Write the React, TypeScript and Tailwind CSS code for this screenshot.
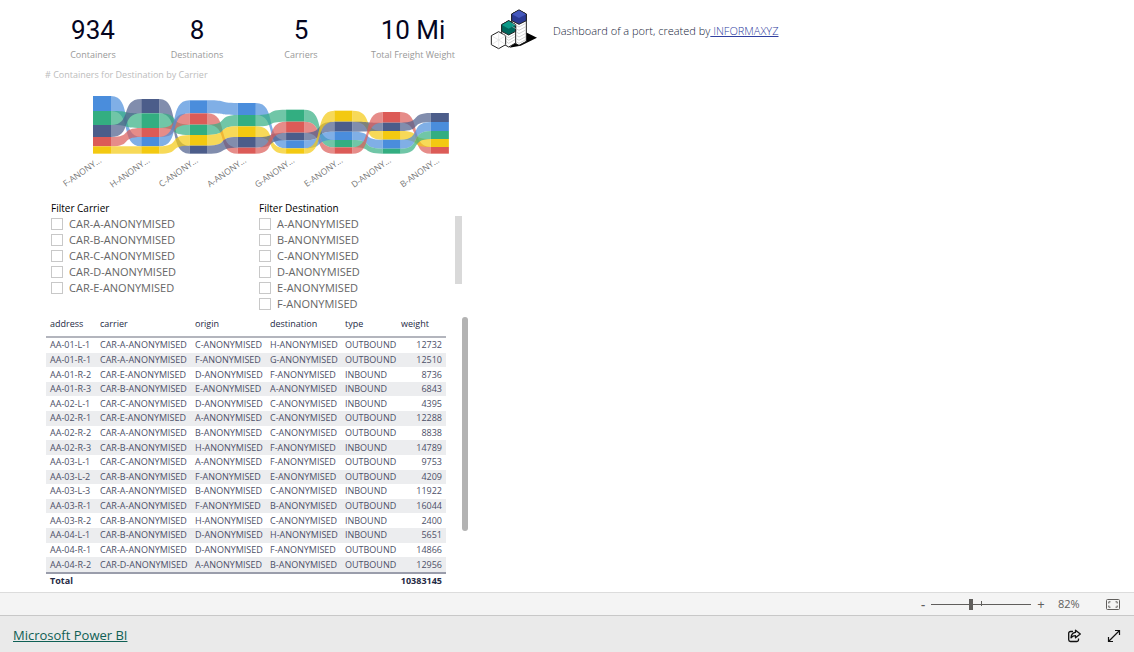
import { useState } from "react";

const kpis = [
  { label: "Containers", value: "934" },
  { label: "Destinations", value: "8" },
  { label: "Carriers", value: "5" },
  { label: "Total Freight Weight", value: "10 Mi" },
];

const carriers = ["A", "B", "C", "D", "E"];
const destinations = ["A", "B", "C", "D", "E", "F"];

const colors: Record<string, string> = {
  blue: "#4a8ddc",
  green: "#33ae81",
  navy: "#4c5d8a",
  red: "#dc5b57",
  yellow: "#f3c911",
};

// carrier order from top to bottom, with the y of every boundary
const ribbons = [
  { name: "F", order: ["blue", "green", "navy", "red", "yellow"], y: [33, 78, 120, 156, 184, 206] },
  { name: "H", order: ["navy", "green", "red", "blue", "yellow"], y: [42, 85, 129, 156, 184, 206] },
  { name: "C", order: ["blue", "red", "green", "yellow", "navy"], y: [46, 85, 119, 150, 182, 206] },
  { name: "A", order: ["blue", "green", "yellow", "navy", "red"], y: [54, 90, 124, 156, 188, 206] },
  { name: "G", order: ["green", "red", "navy", "blue", "yellow"], y: [74, 110, 143, 166, 190, 206] },
  { name: "E", order: ["yellow", "navy", "blue", "green", "red"], y: [77, 110, 140, 165, 187, 206] },
  { name: "D", order: ["red", "navy", "yellow", "blue", "green"], y: [81, 113, 138, 164, 191, 206] },
  { name: "B", order: ["navy", "blue", "green", "yellow", "red"], y: [84, 111, 138, 162, 186, 206] },
];

const rows = [
  ["AA-01-L-1", "A", "C", "H", "OUTBOUND", 12732],
  ["AA-01-R-1", "A", "F", "G", "OUTBOUND", 12510],
  ["AA-01-R-2", "E", "D", "F", "INBOUND", 8736],
  ["AA-01-R-3", "B", "E", "A", "INBOUND", 6843],
  ["AA-02-L-1", "C", "D", "C", "INBOUND", 4395],
  ["AA-02-R-1", "E", "A", "C", "OUTBOUND", 12288],
  ["AA-02-R-2", "A", "B", "C", "OUTBOUND", 8838],
  ["AA-02-R-3", "B", "H", "F", "INBOUND", 14789],
  ["AA-03-L-1", "C", "A", "F", "OUTBOUND", 9753],
  ["AA-03-L-2", "B", "F", "E", "OUTBOUND", 4209],
  ["AA-03-L-3", "A", "B", "C", "INBOUND", 11922],
  ["AA-03-R-1", "A", "F", "B", "OUTBOUND", 16044],
  ["AA-03-R-2", "B", "H", "C", "INBOUND", 2400],
  ["AA-04-L-1", "B", "D", "H", "INBOUND", 5651],
  ["AA-04-R-1", "A", "D", "F", "OUTBOUND", 14866],
  ["AA-04-R-2", "D", "A", "B", "OUTBOUND", 12956],
];

const BAR = 54;
const STEP = 144.8;

function ribbonPath(i: number, color: string) {
  const a = ribbons[i];
  const b = ribbons[i + 1];
  const ai = a.order.indexOf(color);
  const bi = b.order.indexOf(color);
  const x1 = i * STEP + BAR;
  const x2 = (i + 1) * STEP;
  const c = (x2 - x1) * 0.72;
  return [
    `M${x1} ${a.y[ai]}`,
    `C${x1 + c} ${a.y[ai]} ${x2 - c} ${b.y[bi]} ${x2} ${b.y[bi]}`,
    `V${b.y[bi + 1]}`,
    `C${x2 - c} ${b.y[bi + 1]} ${x1 + c} ${a.y[ai + 1]} ${x1} ${a.y[ai + 1]}Z`,
  ].join("");
}

function RibbonChart() {
  return (
    <svg viewBox="-144 0 1260 330" className="block h-[110px] w-[420px]" role="img" aria-label="Containers for destination by carrier">
      {ribbons.slice(0, -1).map((r, i) =>
        r.order.map((color) => (
          <path key={r.name + color} d={ribbonPath(i, color)} fill={colors[color]} fillOpacity={0.7} />
        ))
      )}
      {ribbons.map((r, i) => (
        <g key={r.name}>
          {r.order.map((color, j) => (
            <rect key={color} x={i * STEP} y={r.y[j]} width={BAR} height={r.y[j + 1] - r.y[j]} fill={colors[color]} />
          ))}
          <text
            transform={`translate(${i * STEP + 27} 230) rotate(-35)`}
            textAnchor="end"
            fontSize="26"
            fill="#777"
          >
            {r.name}-ANONY...
          </text>
        </g>
      ))}
    </svg>
  );
}

function Logo() {
  return (
    <svg viewBox="30 24 144 126" className="h-[42px] w-[48px] shrink-0" aria-hidden="true">
      <path d="M136 96L171 113L122 137L88 143Z" fill="#000" />
      <g stroke="#222" strokeWidth="3" strokeLinejoin="round">
        <path d="M117 30L139 42V124L117 136L95 124V42Z" fill="#fff" />
        <path d="M117 30L139 42V62L117 73L95 62V42Z" fill="#2b3a94" />
        <path d="M117 31L138 43L117 54L96 43Z" fill="#4558bd" stroke="none" />
        <path d="M86 62L107 74V129L86 141L65 129V74Z" fill="#fff" />
        <path d="M86 62L107 74V94L86 105L65 94V74Z" fill="#00665c" />
        <path d="M86 63L106 75L86 86L66 75Z" fill="#0c9a88" stroke="none" />
        <path d="M56 95L77 107V134L56 146L34 134V107Z" fill="#fff" />
      </g>
      <path
        d="M97 70L117 81L137 70M97 80L117 91L137 80M109 96L117 101L137 90M109 106L117 111L137 100M109 116L117 121L137 110M109 125L117 130L137 119M67 102L86 113L105 102M78 115L86 121L105 110M78 124L86 130L105 119"
        fill="none"
        stroke="#bbb"
        strokeWidth="2"
      />
      <path d="M36 108L56 120L76 108M56 97V145M36 133L56 120L76 133" fill="none" stroke="#ddd" strokeWidth="2" />
    </svg>
  );
}

function Filter({ title, prefix, items }: { title: string; prefix: string; items: string[] }) {
  return (
    <fieldset className="w-52">
      <legend className="text-[10px] leading-4 text-black">{title}</legend>
      {items.map((item) => (
        <label key={item} className="flex h-4 items-center gap-1.5 text-[11px] text-[#666]">
          <input type="checkbox" className="size-3 appearance-none border border-[#c8c8c8] bg-white checked:bg-[#666]" />
          {prefix}{item}-ANONYMISED
        </label>
      ))}
    </fieldset>
  );
}

function ContainersTable() {
  return (
    <table className="h-[271px] w-[400px] table-fixed border-collapse text-left text-[9px] leading-[14px] text-[#4c5068]">
      <colgroup>
        <col className="w-[50px]" />
        <col className="w-[95px]" />
        <col className="w-[75px]" />
        <col className="w-[75px]" />
        <col className="w-[56px]" />
        <col />
      </colgroup>
      <thead>
        <tr className="h-5 border-b-2 border-[#b3b5bd] align-top text-[#252a44]">
          {["address", "carrier", "origin", "destination", "type", "weight"].map((h) => (
            <th key={h} className="pl-1 font-normal">{h}</th>
          ))}
        </tr>
      </thead>
      <tbody>
        {rows.map(([address, carrier, origin, destination, type, weight]) => (
          <tr key={address} className="whitespace-nowrap even:bg-[#ecedef]">
            <td className="pl-1">{address}</td>
            <td className="pl-1">CAR-{carrier}-ANONYMISED</td>
            <td className="pl-1">{origin}-ANONYMISED</td>
            <td className="pl-1">{destination}-ANONYMISED</td>
            <td className="pl-1">{type}</td>
            <td className="pr-1 text-right">{weight}</td>
          </tr>
        ))}
      </tbody>
      <tfoot>
        <tr className="h-[14px] border-t-2 border-[#9a9dab] font-bold text-[#252a44]">
          <td className="pl-1">Total</td>
          <td colSpan={5} className="pr-1 text-right">10383145</td>
        </tr>
      </tfoot>
    </table>
  );
}

export default function App() {
  const [zoom, setZoom] = useState(40);

  return (
    <div className="flex min-h-screen flex-col bg-white font-['Open_Sans','Noto_Sans',sans-serif]">
      <main className="flex flex-1 items-start">
        <div className="w-[490px] shrink-0 pt-3">
          <dl className="grid grid-cols-[104px_104px_104px_120px] pl-[41px] text-center">
            {kpis.map((k) => (
              <div key={k.label} className="flex flex-col-reverse">
                <dt className="text-[9px] leading-[14px] text-[#999]">{k.label}</dt>
                <dd className="font-['Roboto',sans-serif] text-[26px] leading-9 text-[#05051e]">{k.value}</dd>
              </div>
            ))}
          </dl>
          <h2 className="pt-1.5 pl-[45px] text-[9px] leading-[14px] text-[#bcbcbc]"># Containers for Destination by Carrier</h2>
          <div className="pt-[3px] pl-[45px]">
            <RibbonChart />
          </div>
          <div className="flex items-start pt-[5px] pl-[51px]">
            <Filter title="Filter Carrier" prefix="CAR-" items={carriers} />
            <Filter title="Filter Destination" prefix="" items={destinations} />
            <div className="mt-4 -ml-3 h-[68px] w-[7px] bg-[#d9d9d9]" />
          </div>
          <div className="flex items-start gap-4 pt-[5px] pl-[46px]">
            <ContainersTable />
            <div className="h-[214px] w-1.5 rounded-full bg-[#b3b3b3]" />
          </div>
        </div>
        <div className="flex items-center gap-[15px] pt-2">
          <Logo />
          <p className="pt-1 text-[11px] font-light text-[#151a38]">
            Dashboard of a port, created by
            <a href="#" className="text-[#3040a0] underline"> INFORMAXYZ</a>
          </p>
        </div>
      </main>

      <div className="flex h-6 items-center justify-end border-t border-b border-t-[#dcdcdc] border-b-[#c8c8c8] bg-[#f4f4f4] pr-3.5 text-[#605e5c]">
        <button aria-label="Zoom out" className="w-4 text-[13px] leading-5 font-semibold">-</button>
        <div className="relative flex h-5 w-[100px] items-center">
          <input
            type="range"
            aria-label="Zoom"
            value={zoom}
            onChange={(e) => setZoom(Number(e.target.value))}
            className="h-[11px] w-full appearance-none bg-[linear-gradient(#605e5c,#605e5c)] bg-[length:100%_1px] bg-center bg-no-repeat [&::-webkit-slider-thumb]:h-[11px] [&::-webkit-slider-thumb]:w-1 [&::-webkit-slider-thumb]:appearance-none [&::-webkit-slider-thumb]:bg-[#605e5c]"
          />
          <span className="pointer-events-none absolute top-[7px] left-1/2 h-[5px] w-px bg-[#605e5c]" />
        </div>
        <button aria-label="Zoom in" className="w-5 text-[13px] leading-5">+</button>
        <span className="w-10 pl-[7px] text-[11px]">82%</span>
        <button aria-label="Fit to page" className="ml-[15px]">
          <svg viewBox="0 0 14 11" className="h-[11px] w-[14px]" fill="none" stroke="#605e5c">
            <rect x="0.5" y="0.5" width="13" height="10" rx="1" />
            <path d="M4.5 2.8H2.8V4.5M2.8 6.5V8.2H4.5M9.5 2.8H11.2V4.5M11.2 6.5V8.2H9.5" />
          </svg>
        </button>
      </div>

      <footer className="flex h-9 items-center justify-between bg-[#eaeaea] pr-[13px] pl-[13px]">
        <a href="#" className="pt-1 text-[13px] font-medium text-[#0f6055] underline">Microsoft Power BI</a>
        <div className="flex items-center gap-[26px] pt-1">
          <button aria-label="Share">
            <svg viewBox="0 0 14 14" className="size-3.5" fill="none" stroke="#111" strokeWidth="1.3" strokeLinejoin="round">
              <path d="M6 2.5H3.500A1.800 1.800 0 0 0 1.700 4.300V10.700A1.800 1.800 0 0 0 3.500 12.500H9.700A1.800 1.800 0 0 0 11.500 10.700V9.500" />
              <path d="M8.500 1.200L13.300 5L8.500 8.800V6.700C6.500 6.700 5.200 7.200 4 8.800C4.200 6 5.700 3.700 8.500 3.400Z" />
            </svg>
          </button>
          <button aria-label="Full screen">
            <svg viewBox="0 0 14 14" className="size-3.5" fill="none" stroke="#111" strokeWidth="1.200">
              <path d="M1.500 12.500L12.500 1.500M8 1.500H12.500V6M1.500 8V12.500H6" />
            </svg>
          </button>
        </div>
      </footer>
    </div>
  );
}
